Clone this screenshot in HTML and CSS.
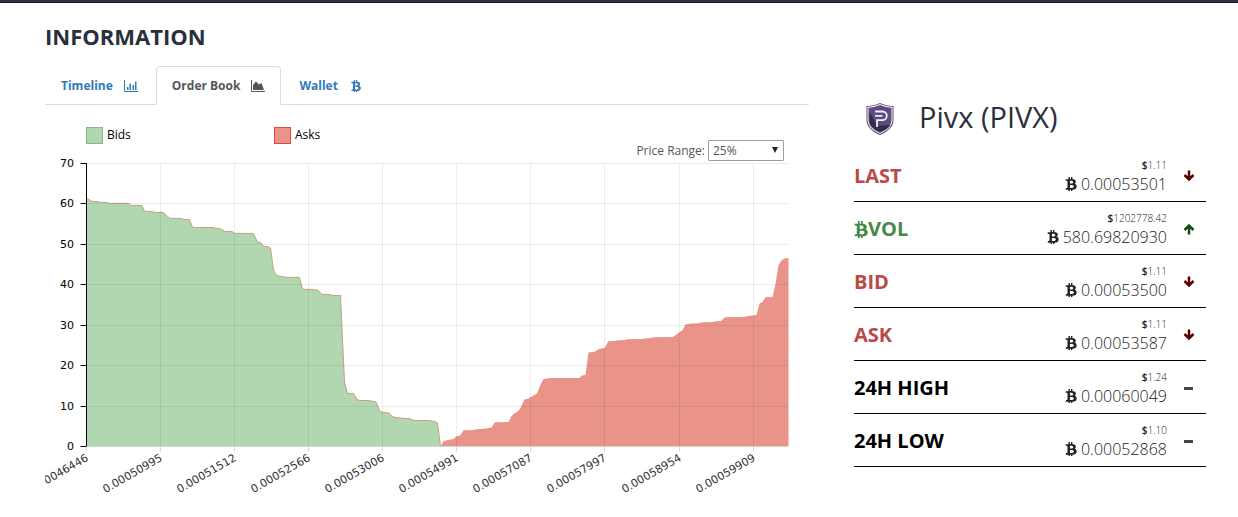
FILE: index.html
```html
<!DOCTYPE html>
<html lang="en">
<head>
<meta charset="utf-8">
<title>Pivx (PIVX)</title>
<link rel="stylesheet" href="styles.css">
</head>
<body>
<svg class="sprite" aria-hidden="true">
  <symbol id="btc" viewBox="0 0 1280 1536"><path d="M1167 496q18 182-131 258 117 28 175 103t45 214q-7 71-32.500 125t-64.500 89-97 58.500-121.500 34.500-145.500 15v255h-154v-251q-80 0-122-1v252h-154v-255q-18 0-54-.5t-55-.5h-200l31-183h111q50 0 58-51v-402h16q-6-1-16-1v-287q-13-68-89-68h-111v-164l212 1q64 0 97-1v-252h154v247q82-2 122-2v-245h154v252q79 7 140 22.500t113 45 82.500 78 36.500 114.500zM952 1042q0-36-15-64t-37-46-57.500-30.500-65.500-18.500-74-9-69-3-64.500 1-47.500 1v338q8 0 37 .5t48 .5 53-1.500 58.500-4 57-8.500 55.500-14 47.500-21 39.500-30 24.500-40 9.500-51zM881 566q0-33-12.500-58.500t-30.500-42-48-28-55-16.500-61.500-8-58-2.500-54 1-39.500.5v307q5 0 34.500.5t46.500 0 50-2 55-5.500 51.500-11 48.500-18.500 37-27 27-38.500 9-51z"/></symbol>
  <symbol id="down" viewBox="0 0 12 12"><path d="M6 .5V9M1.500 5 6 9.500 10.500 5" fill="none" stroke="currentColor" stroke-width="2.500"/></symbol>
  <symbol id="up" viewBox="0 0 12 12"><path d="M6 11.500V3M1.500 7 6 2.500 10.500 7" fill="none" stroke="currentColor" stroke-width="2.500"/></symbol>
  <symbol id="minus" viewBox="0 0 12 12"><rect x="1" y="5" width="9" height="3" rx=".5"/></symbol>
</svg>
<div class="topbar"></div>
<main class="page">
  <section class="info">
    <h1 class="title">INFORMATION</h1>
    <nav class="tabs">
      <a class="tab" href="#timeline">Timeline
        <svg class="tab-icon" viewBox="0 0 14 12"><path d="M.5 0v11.500H14" fill="none" stroke="currentColor"/><path d="M3 7h1.500v3H3zM5.500 3.500H7V10H5.500zM8.500 5H10v5H8.500zM11 1.500h1.500V10H11z"/></svg></a>
      <a class="tab active" href="#orders" aria-current="page">Order Book
        <svg class="tab-icon" viewBox="0 0 14 12"><path d="M.5 0v11.500H14" fill="none" stroke="currentColor"/><path d="M2 10V5l3-3.500 3 3L10.500 3 13 10z"/></svg></a>
      <a class="tab" href="#wallet">Wallet
        <svg class="tab-icon"><use href="#btc"/></svg></a>
    </nav>
    <div class="legend">
      <span class="key"><i class="swatch bids"></i>Bids</span>
      <span class="key"><i class="swatch asks"></i>Asks</span>
    </div>
    <div class="range">
      <label for="range">Price Range:</label>
      <span class="select-box"><select id="range"><option>25%</option><option>50%</option><option>100%</option></select></span>
    </div>
    <svg class="chart" viewBox="45 157 764 345" role="img" aria-label="Order book depth">
      <path class="bid-area" d="M86.500 446.500V198.500L89 199.500 92 201.300 98 201.700 100 202.300 106 202.500 110 203.300 128.500 203.400 131.500 205.400 142 205.500 144.500 211.300 151 211.400 155 212.400 163.500 212.500 167 216 170 218.300 180 218.400 184 219.400 189.500 219.500 192.500 227.400 213 227.500 215 228.300 219 228.500 222 229.500 224.500 231.300 232 231.500 234.500 233.300 253.500 233.500 257.500 242.300 260.500 242.500 263.500 246.300 267 246.500 270.500 248 273.500 270 275 273 277 275.800 282 276.500 286 277.300 299.500 277.400 302.500 289.300 312 289.400 318 290.300 321.500 294.300 329 294.500 333 295.400 340.500 295.500 344.500 382 347.500 393.300 353.500 393.400 357 399.800 360 400.400 369 400.600 376 402 380 411.800 389 413 393 417 404 418.500 409 418.500 414 420.500 428 420.500 435 421.500 437.500 423 440.500 446.500z"/>
      <path class="bid-line" d="M86.500 198.500L89 199.500 92 201.300 98 201.700 100 202.300 106 202.500 110 203.300 128.500 203.400 131.500 205.400 142 205.500 144.500 211.300 151 211.400 155 212.400 163.500 212.500 167 216 170 218.300 180 218.400 184 219.400 189.500 219.500 192.500 227.400 213 227.500 215 228.300 219 228.500 222 229.500 224.500 231.300 232 231.500 234.500 233.300 253.500 233.500 257.500 242.300 260.500 242.500 263.500 246.300 267 246.500 270.500 248 273.500 270 275 273 277 275.800 282 276.500 286 277.300 299.500 277.400 302.500 289.300 312 289.400 318 290.300 321.500 294.300 329 294.500 333 295.400 340.500 295.500 344.500 382 347.500 393.300 353.500 393.400 357 399.800 360 400.400 369 400.600 376 402 380 411.800 389 413 393 417 404 418.500 409 418.500 414 420.500 428 420.500 435 421.500 437.500 423 440.500 446"/>
      <path class="ask-area" d="M440.500 446.500L443.500 441.300 448 440 453.500 439 456.500 436.300 460.500 435.300 463.500 430.300 474 430 476 429.300 484 428.700 491.500 427.500 495 422.300 508.500 422 511.500 416 514 413.800 518.500 411 521 407 524.500 399.300 528 399 530 397.300 537 393.500 540 386 543.300 379.300 550 378 579.500 378 582.500 375.300 585.500 375 588.500 352.300 594 352 599 349 604.500 348 608.500 341.300 615 341 618 340.200 625 340 627 339.200 643 339 646 338.200 651 338 654 337.200 673 337 679 332.500 682.500 330.300 685.500 324.500 691 323.500 699 323.300 702 322.300 713 322 716 321.200 721 321 725 317.200 744 317 747 316.200 756.500 315 759.500 303.500 762.500 302 765.500 297.200 772.500 297 775.500 284 778.500 265 782 260 785 258.300 788.500 258V446.500z"/>
      <path class="grid" d="M86.500 163.500h702M86.500 203.500h702M86.500 244.500h702M86.500 284.500h702M86.500 325.500h702M86.500 365.500h702M86.500 406.500h702M160.500 163.500v283M234.500 163.500v283M308.500 163.500v283M382.500 163.500v283M456.500 163.500v283M530.500 163.500v283M604.500 163.500v283M679.500 163.500v283M753.500 163.500v283"/>
      <path class="x-axis" d="M86.500 446.500h702M86.500 446.500v5M160.500 446.500v5M234.500 446.500v5M308.500 446.500v5M382.500 446.500v5M456.500 446.500v5M530.500 446.500v5M604.500 446.500v5M679.500 446.500v5M753.500 446.500v5"/>
      <path class="y-axis" d="M86.500 163v283M80.500 163.500h6M80.500 203.500h6M80.500 244.500h6M80.500 284.500h6M80.500 325.500h6M80.500 365.500h6M80.500 406.500h6M80.500 446.500h6"/>
      <g class="axis-text">
        <text x="74" y="167">70</text><text x="74" y="207">60</text><text x="74" y="248">50</text><text x="74" y="288">40</text>
        <text x="74" y="329">30</text><text x="74" y="369">20</text><text x="74" y="410">10</text><text x="74" y="450">0</text>
      </g>
      <g class="axis-text price">
        <text transform="translate(89 460) rotate(-30)">0.00046446</text>
        <text transform="translate(163 460) rotate(-30)">0.00050995</text>
        <text transform="translate(237 460) rotate(-30)">0.00051512</text>
        <text transform="translate(311 460) rotate(-30)">0.00052566</text>
        <text transform="translate(385 460) rotate(-30)">0.00053006</text>
        <text transform="translate(459 460) rotate(-30)">0.00054991</text>
        <text transform="translate(533 460) rotate(-30)">0.00057087</text>
        <text transform="translate(607 460) rotate(-30)">0.00057997</text>
        <text transform="translate(682 460) rotate(-30)">0.00058954</text>
        <text transform="translate(756 460) rotate(-30)">0.00059909</text>
      </g>
    </svg>
  </section>
  <aside class="coin">
    <header class="coin-head">
      <svg class="logo" viewBox="0 0 28 32" aria-hidden="true">
        <path d="M14 0C18 2 23 3 27.500 3v14c0 7-6 12-13.500 15C6.500 29 .5 24 .5 17V3C5 3 10 2 14 0z" fill="#55496f"/>
        <path d="M14 1.500c4 1.700 8 2.500 12 2.800V17c0 6-5 10.500-12 13.300C7 27.500 2 23 2 17V4.300c4-.3 8-1.100 12-2.800z" fill="#5c4a80" stroke="#e4e0ec" stroke-width="1.200"/>
        <path d="M3.500 9l8 14 13-1c-2 3.200-6 5.500-10.500 7.300C8 27 3.500 22.500 3.500 17z" fill="#352c48"/>
        <path d="M9 8.500h7.500a4.300 4.300 0 0 1 0 8.600H11V24M9 12.800h7.500" fill="none" stroke="#f2eff7" stroke-width="1.800"/>
      </svg>
      <h2 class="coin-name">Pivx (PIVX)</h2>
    </header>
    <dl class="stats">
      <div class="stat down"><dt>LAST</dt><dd><small><b>$</b>1.11</small><span><svg class="unit"><use href="#btc"/></svg>0.00053501</span></dd><dd class="trend"><svg><use href="#down"/></svg></dd></div>
      <div class="stat up"><dt><svg class="dt-icon"><use href="#btc"/></svg>VOL</dt><dd><small><b>$</b>1202778.42</small><span><svg class="unit"><use href="#btc"/></svg>580.69820930</span></dd><dd class="trend"><svg><use href="#up"/></svg></dd></div>
      <div class="stat down"><dt>BID</dt><dd><small><b>$</b>1.11</small><span><svg class="unit"><use href="#btc"/></svg>0.00053500</span></dd><dd class="trend"><svg><use href="#down"/></svg></dd></div>
      <div class="stat down"><dt>ASK</dt><dd><small><b>$</b>1.11</small><span><svg class="unit"><use href="#btc"/></svg>0.00053587</span></dd><dd class="trend"><svg><use href="#down"/></svg></dd></div>
      <div class="stat"><dt>24H HIGH</dt><dd><small><b>$</b>1.24</small><span><svg class="unit"><use href="#btc"/></svg>0.00060049</span></dd><dd class="trend"><svg><use href="#minus"/></svg></dd></div>
      <div class="stat"><dt>24H LOW</dt><dd><small><b>$</b>1.10</small><span><svg class="unit"><use href="#btc"/></svg>0.00052868</span></dd><dd class="trend"><svg><use href="#minus"/></svg></dd></div>
    </dl>
  </aside>
</main>
</body>
</html>
```
FILE: styles.css
```css
* { box-sizing: border-box; }
body { margin: 0; background: #fff; color: #555; font: 13px/20px "Open Sans", sans-serif; }
svg { fill: currentColor; }
.sprite { position: absolute; width: 0; height: 0; }
.topbar { height: 3px; background: #2a323d; border-bottom: 1px solid #181e26; }
.page { display: grid; grid-template-columns: 764fr 352fr; gap: 45px; padding: 19px 32px 0 45px; }
.info { min-width: 0; }
.title { margin: 0; font-size: 22px; line-height: 28px; font-weight: 700; color: #28303b; }

.tabs { display: flex; gap: 2px; margin-top: 16px; border-bottom: 1px solid #ddd; }
.tab { display: flex; align-items: center; gap: 11px; height: 39px; margin-bottom: -1px; padding: 0 15px; border: 1px solid transparent; border-radius: 4px 4px 0 0; color: #337ab7; font-size: 12px; font-weight: 700; text-decoration: none; }
.tab.active { color: #555; background: #fff; border-color: #ddd #ddd #fff; }
.tab-icon { width: 14px; height: 12px; }

.legend { display: flex; padding: 21px 0 0 41px; }
.key { display: flex; align-items: center; gap: 4px; width: 188px; height: 18px; color: #000; font-size: 12px; }
.swatch { width: 17px; height: 17px; border: 1px solid; }
.swatch.bids { background: #b0d7b0; border-color: #7fbf7f; }
.swatch.asks { background: #ea9389; border-color: #db4c3c; }
.range { display: flex; align-items: center; justify-content: flex-end; gap: 3px; margin-top: -4px; padding-right: 25px; font-size: 12px; }
.select-box { position: relative; display: flex; }
.select-box::after { content: ""; position: absolute; right: 6px; top: 7px; border: solid transparent; border-width: 6px 3px 0; border-top-color: #222; pointer-events: none; }
select { appearance: none; width: 76px; height: 21px; padding: 0 4px; border: 1px solid #a0a0a0; border-radius: 1px; background: #fff; color: #555; font: inherit; line-height: 19px; }

.chart { display: block; width: 100%; height: auto; margin-top: -4px; overflow: hidden; }
.bid-area { fill: #b0d7b0; }
.bid-line { fill: none; stroke: #c7a083; }
.ask-area { fill: #ea9389; }
.grid { fill: none; stroke: rgba(0, 0, 0, .07); }
.x-axis { fill: none; stroke: #d4d4d4; }
.y-axis { fill: none; stroke: #000; }
.axis-text { font: 11px "DejaVu Sans", sans-serif; fill: #000; text-anchor: end; }
.price { fill: #333; }

.coin { padding-top: 77px; }
.coin-head { display: flex; align-items: center; gap: 25px; height: 40px; padding-left: 12px; }
.logo { width: 28px; height: 32px; }
.coin-name { margin: 0; padding-bottom: 4px; font-size: 29px; line-height: 36px; font-weight: 500; color: #28303b; }
.stats { margin: 10px 0 0; }
.stat { display: flex; align-items: center; height: 53px; padding-top: 2px; border-bottom: 1px solid #000; color: #000; }
.stat dt { display: flex; align-items: center; font-size: 20px; line-height: 24px; font-weight: 700; }
.stat dd { margin: 0 0 0 auto; }
.stat dd:not(.trend) { display: flex; flex-direction: column; align-items: flex-end; color: #222; }
.stat small { font-size: 10px; line-height: 15px; font-weight: 300; }
.stat small b { font-weight: 600; }
.stat span { display: flex; align-items: center; gap: 4px; font-size: 16px; line-height: 22px; font-weight: 300; }
.unit { width: 12px; height: 14px; }
.dt-icon { width: 14px; height: 17px; }
.stat .trend { display: flex; width: 39px; margin: 0; padding-left: 16px; color: #444; }
.trend svg { width: 12px; height: 12px; }
.stat.down dt { color: #b94a48; }
.stat.up dt { color: #468847; }
.stat.down .trend { color: #5a0000; }
.stat.up .trend { color: #0f4d12; }
```
